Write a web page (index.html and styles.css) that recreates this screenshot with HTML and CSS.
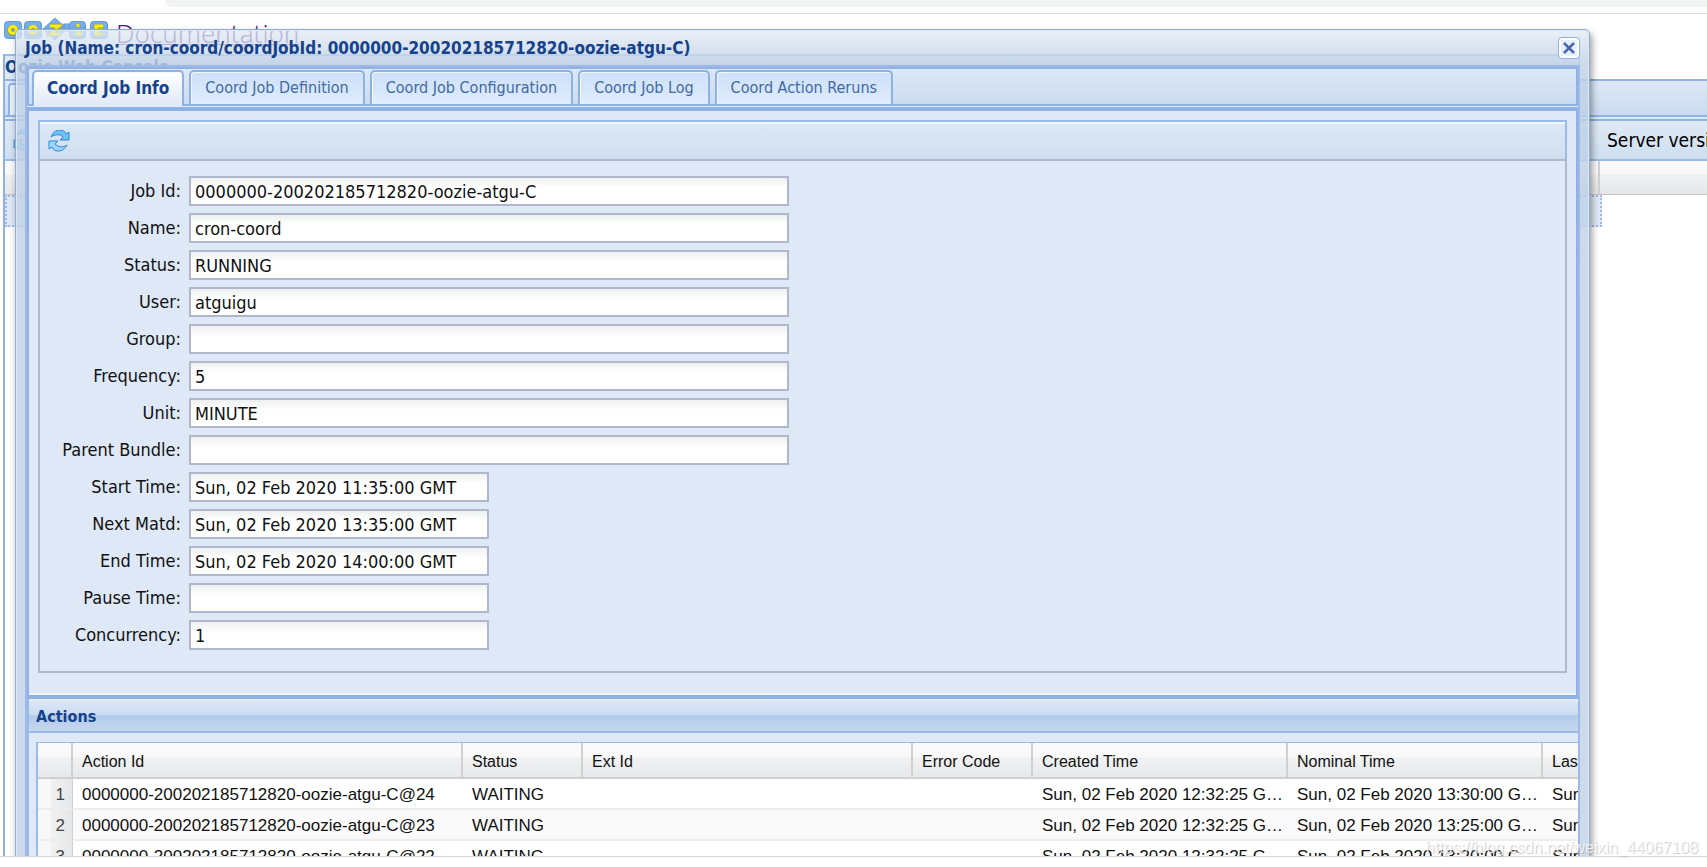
FILE: index.html
```html
<!DOCTYPE html>
<html lang="en">
<head>
<meta charset="utf-8">
<title>Oozie Web Console</title>
<link rel="stylesheet" href="styles.css">
</head>
<body>
<div class="browser-bar"><div class="address"></div></div>
<main class="page">
  <header class="masthead">
    <svg class="logo" viewBox="0 0 104 20" width="104" height="20" role="img" aria-label="Oozie">
      <g fill="#79aee8" stroke="#5b9be0">
        <rect x=".5" y=".5" width="17" height="17" rx="3"/>
        <rect x="20.500" y=".5" width="17" height="17" rx="3"/>
        <path d="M39 8 51 -3l12 11-12 11z"/>
        <path d="M60 3h8v7h-8z"/>
        <rect x="65.500" y=".5" width="16" height="17" rx="3"/>
        <rect x="86.500" y=".5" width="17" height="17" rx="3"/>
      </g>
      <g fill="none" stroke="#8a9a62" stroke-width="4.500">
        <circle cx="9" cy="9.500" r="3.500"/><circle cx="29" cy="9.500" r="3.500"/>
        <path d="M46 5h9l-8 8h9M74 8v6M71 13h7M74 3v3M99 5h-7v8h7M92 9h6"/>
      </g>
      <g fill="none" stroke="#fff200" stroke-width="3">
        <circle cx="9" cy="9" r="3.500"/><circle cx="29" cy="9" r="3.500"/>
        <path d="M46 5h9l-8 8h9M74 8v5M71 13h7M74 3v3M99 5h-7v8h7M92 9h6"/>
      </g>
    </svg>
    <a class="doc-link" href="#docs">Documentation</a>
  </header>
  <section class="console">
    <h1 class="console-title">Oozie Web Console</h1>
    <div class="console-tabs"><div class="console-tab"></div></div>
    <div class="console-rule"></div>
    <div class="console-toolbar">
      <svg class="refresh" viewBox="0 0 22 22" width="22" height="22"><use href="#refresh"/></svg>
      <span class="version">Server version</span>
    </div>
    <div class="console-columns"><div class="console-column"></div></div>
    <div class="console-row"></div>
  </section>

  <section class="window" aria-labelledby="window-title">
    <header class="window-head">
      <h2 id="window-title" class="window-title">Job (Name: cron-coord/coordJobId: 0000000-200202185712820-oozie-atgu-C)</h2>
      <button class="close" type="button" aria-label="Close">
        <svg viewBox="0 0 16 16" width="16" height="16"><path d="M3 3l10 10M13 3 3 13" stroke="#4a66ae" stroke-width="2.500"/></svg>
      </button>
    </header>
    <div class="window-body">
      <nav class="tabs">
        <button class="tab tab-active" type="button">Coord Job Info</button>
        <button class="tab" type="button">Coord Job Definition</button>
        <button class="tab" type="button">Coord Job Configuration</button>
        <button class="tab" type="button">Coord Job Log</button>
        <button class="tab" type="button">Coord Action Reruns</button>
      </nav>
      <div class="tab-rule"></div>
      <div class="panel">
        <div class="toolbar">
          <button class="tool" type="button" aria-label="Refresh">
            <svg class="refresh" viewBox="0 0 22 22" width="22" height="22">
              <g id="refresh" stroke="#2f88da" stroke-linejoin="round">
                <path fill="#6fc0fa" d="M3 7C5 2 8 0 12 0c3 0 5 1 6 4l3-2v8h-9l3-3c-3-3-8-3-12 0z"/>
                <path fill="#9bd4fb" d="M19 15c-2 4-5 6-9 6-3 0-5-1-6-4l-3 2v-8h9l-3 3c3 3 8 4 12 1z"/>
              </g>
            </svg>
          </button>
        </div>
        <form class="form">
          <label for="job">Job Id:</label><input id="job" value="0000000-200202185712820-oozie-atgu-C" readonly>
          <label for="name">Name:</label><input id="name" value="cron-coord" readonly>
          <label for="status">Status:</label><input id="status" value="RUNNING" readonly>
          <label for="user">User:</label><input id="user" value="atguigu" readonly>
          <label for="group">Group:</label><input id="group" readonly>
          <label for="freq">Frequency:</label><input id="freq" value="5" readonly>
          <label for="unit">Unit:</label><input id="unit" value="MINUTE" readonly>
          <label for="bundle">Parent Bundle:</label><input id="bundle" readonly>
          <label for="start">Start Time:</label><input class="short" id="start" value="Sun, 02 Feb 2020 11:35:00 GMT" readonly>
          <label for="next">Next Matd:</label><input class="short" id="next" value="Sun, 02 Feb 2020 13:35:00 GMT" readonly>
          <label for="end">End Time:</label><input class="short" id="end" value="Sun, 02 Feb 2020 14:00:00 GMT" readonly>
          <label for="pause">Pause Time:</label><input class="short" id="pause" readonly>
          <label for="conc">Concurrency:</label><input class="short" id="conc" value="1" readonly>
        </form>
      </div>
      <section class="actions">
        <h3 class="actions-title">Actions</h3>
        <div class="grid-wrap">
          <table class="grid">
            <colgroup><col class="c-num"><col class="c-id"><col class="c-status"><col class="c-ext"><col class="c-err"><col class="c-time"><col class="c-time"><col class="c-time"></colgroup>
            <thead><tr><th></th><th>Action Id</th><th>Status</th><th>Ext Id</th><th>Error Code</th><th>Created Time</th><th>Nominal Time</th><th>Last Modified Time</th></tr></thead>
            <tbody>
              <tr><td>1</td><td>0000000-200202185712820-oozie-atgu-C@24</td><td>WAITING</td><td></td><td></td><td>Sun, 02 Feb 2020 12:32:25 GMT</td><td>Sun, 02 Feb 2020 13:30:00 GMT</td><td>Sun, 02 Feb 2020</td></tr>
              <tr><td>2</td><td>0000000-200202185712820-oozie-atgu-C@23</td><td>WAITING</td><td></td><td></td><td>Sun, 02 Feb 2020 12:32:25 GMT</td><td>Sun, 02 Feb 2020 13:25:00 GMT</td><td>Sun, 02 Feb 2020</td></tr>
              <tr><td>3</td><td>0000000-200202185712820-oozie-atgu-C@22</td><td>WAITING</td><td></td><td></td><td>Sun, 02 Feb 2020 12:32:25 GMT</td><td>Sun, 02 Feb 2020 13:20:00 GMT</td><td>Sun, 02 Feb 2020</td></tr>
            </tbody>
          </table>
        </div>
      </section>
    </div>
  </section>
</main>
<footer class="shelf"></footer>
<div class="watermark">https://blog.csdn.net/weixin_44067108</div>
</body>
</html>
```
FILE: styles.css
```css
* { box-sizing: border-box; }
body {
  margin: 0;
  height: 100vh;
  display: flex;
  flex-direction: column;
  overflow: hidden;
  position: relative;
  background: #fff;
  color: #111;
  font: 18px/22px "DejaVu Sans Condensed", "Noto Sans", sans-serif;
}
h1, h2, h3 { margin: 0; font-weight: bold; color: #15428b; }
button, input { font: inherit; color: inherit; }

.browser-bar { flex: none; height: 14px; padding-left: 165px; border-bottom: 1px solid #dadce0; }
.address { height: 7px; background: #f1f3f4; border-bottom-left-radius: 14px; }
.page { flex: 1; min-height: 0; position: relative; overflow: hidden; display: flex; flex-direction: column; }
.shelf { flex: none; height: 11px; border-top: 1px solid #d5d5d5; background: #fff; }

.masthead { flex: none; display: flex; gap: 8px; height: 40px; padding: 7px 4px 0; }
.logo { overflow: visible; }
.doc-link { color: #551a8b; font: 26px/24px "Noto Sans", sans-serif; font-weight: 300; text-decoration-thickness: 1px; }

.console { flex: 1; margin-left: 3px; border-left: 2px solid #8db2e3; display: flex; flex-direction: column; }
.console-title { flex: none; width: calc(100% - 127px); height: 25px; border: solid #99bbe8; border-width: 2px 2px 0 0; font-size: 17px; line-height: 22px; background: #dfe9f6; }
.console-tabs { flex: none; height: 38px; padding: 2px 3px 0; border: solid #8db2e3; border-width: 2px 0; background: linear-gradient(#dde8f6, #cbdbef); }
.console-tab { width: 80px; height: 32px; border: 2px solid #8db2e3; border-bottom: 0; border-radius: 4px 4px 0 0; background: #e9f1fb; }
.console-rule { flex: none; height: 4px; border-bottom: 2px solid #8db2e3; background: #dfe8f6; }
.console-toolbar { flex: none; height: 40px; padding: 0 0 0 8px; display: flex; align-items: center; justify-content: space-between; border-bottom: 2px solid #99bbe8; background: linear-gradient(#dfe9f5, #cfdff0); overflow: hidden; }
.version { width: 100px; font-size: 19px; color: #000; white-space: nowrap; }
.console-columns { flex: none; height: 34px; border-bottom: 1px solid #c5c5c5; background: linear-gradient(#f9f9f9 40%, #f0f1f2 41%, #e6e7e9); }
.console-column { width: calc(100% - 107px); height: 33px; border-right: 2px solid #d0d0d0; }
.console-row { flex: none; width: calc(100% - 105px); height: 32px; border: 2px dotted #a3bae9; background: #dfe8f6; }

.window {
  position: absolute;
  top: 15px;
  right: 117px;
  bottom: -8px;
  left: 15px;
  padding: 0 9px;
  display: flex;
  flex-direction: column;
  border: 1px solid #93add0;
  border-radius: 5px;
  background: linear-gradient(rgba(226, 234, 243, .75), rgba(192, 209, 230, .82) 34px, rgba(196, 212, 232, .86));
  box-shadow: inset 0 0 0 1px #dce8f5, 2px 4px 7px rgba(0, 0, 0, .4);
}
.window-head { flex: none; height: 35px; display: flex; align-items: center; justify-content: space-between; }
.window-title { font-size: 17px; white-space: nowrap; }
.close { display: grid; place-items: center; width: 22px; height: 22px; padding: 0; border: 1px solid #8db2e3; border-radius: 4px; background: #e6f1fd; box-shadow: inset 0 0 0 2px #fff; }
.window-body { flex: 1; min-height: 0; overflow: hidden; display: flex; flex-direction: column; border: 2px solid #a0b8e8; border-bottom: 0; background: #dfe8f6; }

.tabs { flex: none; height: 39px; padding: 1px 4px 0 3px; display: flex; gap: 5px; border: 2px solid #8db2e3; background: linear-gradient(#dde8f6, #cbdbef); }
.tab { height: 34px; padding: 0 14px; border: 2px solid #8db2e3; border-bottom: 0; border-radius: 5px 5px 0 0; background: linear-gradient(#cfe0f8, #deecfd); box-shadow: inset 1px 1px 0 #f2f8ff; color: #416aa3; font-size: 16px; white-space: nowrap; }
.tab-active { height: 36px; padding: 0 13px 2px; background: linear-gradient(#fff, #dfe8f6); color: #15428b; font-weight: bold; font-size: 17px; }
.tab-rule { flex: none; height: 5px; border-bottom: 4px solid #8db2e3; background: #deecfd; }

.panel { flex: none; padding: 9px 9px 22px; border: solid #8db2e3; border-width: 0 2px 4px; box-shadow: inset 0 -2px 0 #f0f5fb; }
.toolbar { height: 41px; padding: 0 8px; display: flex; align-items: center; border: 2px solid #99bbe8; border-bottom-color: #b1b7cb; box-shadow: inset 0 2px 0 #f0f5fb; background: linear-gradient(#dce8f5, #cfdeef); }
.tool { display: grid; padding: 0; border: 0; background: none; }
.form { padding: 15px 20px 21px 0; display: grid; grid-template-columns: 141px minmax(0, 600px); column-gap: 8px; row-gap: 7px; border: 2px solid #b1b7cb; border-top: 0; }
.form label { text-align: right; line-height: 30px; }
.form input { width: 100%; height: 30px; padding: 0 4px; border: 2px solid #b1b7cb; border-radius: 0; background: linear-gradient(#eef0f0, #fff 10px); outline: 0; }
.form .short { width: 50%; }

.actions { flex: 1; min-height: 0; border-left: 2px solid #99bbe8; }
.actions-title { height: 34px; padding-left: 7px; font-size: 16px; line-height: 36px; border-bottom: 2px solid #99bbe8; background: linear-gradient(#eaf2fb, #dae6f4 3px, #cbdcf1 50%, #b1cbeb 51%, #c5d7f0); }
.grid-wrap { margin: 9px 0 0 7px; border: solid #99bbe8; border-width: 1px 0 0 2px; overflow: hidden; background: #fff; }
.grid { width: 1760px; table-layout: fixed; border-collapse: separate; border-spacing: 0; font: 17px/20px "Liberation Sans", Arial, sans-serif; }
.c-num { width: 35px; }
.c-id { width: 390px; }
.c-status { width: 120px; }
.c-ext { width: 330px; }
.c-err { width: 120px; }
.c-time { width: 255px; }
.grid th, .grid td { padding: 2px 2px 0 9px; text-align: left; font-weight: normal; white-space: nowrap; overflow: hidden; text-overflow: ellipsis; }
.grid th { height: 36px; padding-top: 4px; font-size: 16px; border-right: 2px solid #d0d0d0; border-bottom: 2px solid #d0d0d0; background: linear-gradient(#f9f9f9 40%, #f1f2f3 41%, #e8e9eb); }
.grid td { height: 31px; border-bottom: 2px solid #ededed; }
.grid tbody tr:nth-child(even) { background: #fafafa; }
.grid td:first-child { padding: 2px 7px 0 0; text-align: right; color: #444; border-right: 1px solid #d0d0d0; background: linear-gradient(90deg, #f8f8f8 35%, #eff0f2 40%, #e6e7e9); }

.watermark { position: absolute; right: 9px; bottom: 10px; font: 16px/18px "Liberation Sans", Arial, sans-serif; color: rgba(255, 255, 255, .8); text-shadow: 1px 1px 1px rgba(120, 120, 120, .4); }
```
